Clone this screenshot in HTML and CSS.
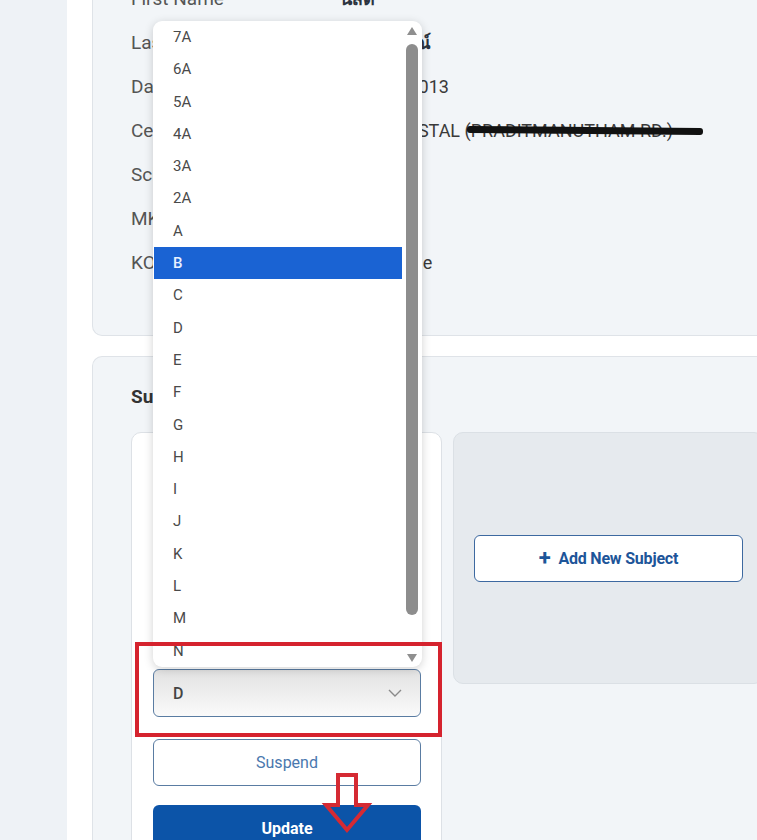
FILE: index.html
```html
<!DOCTYPE html>
<html lang="en">
<head>
    <meta charset="UTF-8">
    <meta name="viewport" content="width=device-width, initial-scale=1.0">
    <title>Student Subjects</title>
    <link rel="stylesheet" href="styles.css">
</head>
<body>
    <div class="main">
        <div class="card info-card">
            <div class="info-row"><span class="info-label">First Name</span><span class="info-value thai">นิสิต</span></div>
            <div class="info-row"><span class="info-label">Last Name</span><span class="info-value thai">มีศรีสุวรรณ์</span></div>
            <div class="info-row"><span class="info-label">Date of Birth</span><span class="info-value">14 June 2013</span></div>
            <div class="info-row"><span class="info-label">Centre</span><span class="info-value">THAI CRYSTAL (<span class="redacted">PRADITMANUTHAM RD.)</span></span></div>
            <div class="info-row"><span class="info-label">School</span><span class="info-value"></span></div>
            <div class="info-row"><span class="info-label">MK ID</span><span class="info-value"></span></div>
            <div class="info-row"><span class="info-label">KO Status</span><span class="info-value">Unavailable</span></div>
        </div>

        <div class="card subjects-card">
            <h2>Subjects</h2>
            <div class="subject-row">
                <div class="subject-box">
                    <div class="field">
                        <div class="field-label">Subject</div>
                        <div class="field-input">Mathematics</div>
                    </div>
                    <div class="field">
                        <div class="field-label">Exam Series</div>
                        <div class="field-input">June 2025</div>
                    </div>
                    <div class="field-label grade-label">Predicted Grade</div>
                    <div class="select-box">
                        <span>D</span>
                        <svg class="chevron" width="14" height="8" viewBox="0 0 14 8"><path d="M1 1l6 6 6-6" fill="none" stroke="#8a8a8a" stroke-width="1.4"/></svg>
                    </div>
                    <button class="btn btn-outline">Suspend</button>
                    <button class="btn btn-primary">Update</button>
                </div>
                <div class="add-box">
                    <button class="btn btn-add"><span class="plus">+</span> Add New Subject</button>
                </div>
            </div>
        </div>
    </div>

    <!-- open grade list -->
    <div class="dropdown">
        <ul class="options">
            <li>7A</li>
            <li>6A</li>
            <li>5A</li>
            <li>4A</li>
            <li>3A</li>
            <li>2A</li>
            <li>A</li>
            <li class="selected">B</li>
            <li>C</li>
            <li>D</li>
            <li>E</li>
            <li>F</li>
            <li>G</li>
            <li>H</li>
            <li>I</li>
            <li>J</li>
            <li>K</li>
            <li>L</li>
            <li>M</li>
            <li>N</li>
        </ul>
        <div class="scrollbar">
            <span class="arrow-up"></span>
            <span class="thumb"></span>
            <span class="arrow-down"></span>
        </div>
    </div>

    <div class="highlight"></div>
    <svg class="pointer" width="56" height="66" viewBox="0 0 56 66">
        <polygon points="18,5 36,5 36,35 48,35 27,60 6,35 18,35" fill="none" stroke="#d52a33" stroke-width="4"/>
    </svg>
</body>
</html>
```

FILE: styles.css
```css
body {
    margin: 0;
    background: #eef2f6;
    font-family: Roboto, "Noto Sans", sans-serif;
    color: #444;
    overflow: hidden;
    height: 840px;
    position: relative;
}
.main {
    margin-left: 67px;
    background: white;
    padding-left: 25px;
    min-height: 900px;
    margin-top: -54px;
}
.card {
    background: #f2f5f8;
    border: 1px solid #dfe3e8;
    border-radius: 10px;
    border-right: none;
    border-top-right-radius: 0;
    border-bottom-right-radius: 0;
}
.info-card {
    padding: 29px 0 51px 38px;
}
.info-row {
    display: flex;
    height: 44px;
    align-items: center;
    font-size: 18px;
}
.info-label {
    width: 209px;
    color: #555;
    font-size: 19px;
    flex-shrink: 0;
}
.info-value {
    color: #3a3a3a;
    white-space: nowrap;
}
.thai {
    font-weight: bold;
    color: #2c3440;
}
.redacted {
    position: relative;
}
.redacted::after {
    content: "";
    position: absolute;
    left: -4px;
    right: -30px;
    top: 7px;
    height: 7px;
    background: #111;
    border-radius: 3px;
    transform: rotate(0.5deg);
}

.subjects-card {
    margin-top: 20px;
    padding: 28px 0 0 38px;
    height: 600px;
}
.subjects-card h2 {
    margin: 0 0 23px;
    font-size: 19px;
    line-height: 24px;
    color: #333;
}
.subject-row {
    display: flex;
    gap: 11px;
    align-items: flex-start;
}
.subject-box {
    width: 311px;
    flex-shrink: 0;
    box-sizing: border-box;
    background: white;
    border: 1px solid #dde1e6;
    border-radius: 10px;
    padding: 21px 20px 40px 21px;
    height: 460px;
}
.field {
    margin-bottom: 22px;
}
.field-label {
    font-size: 14px;
    line-height: 19px;
    margin-bottom: 6px;
    color: #555;
}
.field-input {
    height: 48px;
    box-sizing: border-box;
    border: 1px solid #c9d0d8;
    border-radius: 6px;
    padding: 0 18px;
    line-height: 46px;
}
.select-box {
    height: 48px;
    box-sizing: border-box;
    border: 1.5px solid #5a7ca2;
    border-radius: 6px;
    background: linear-gradient(#e2e2e2, #fafafa);
    display: flex;
    align-items: center;
    justify-content: space-between;
    padding: 0 18px 0 19px;
    font-size: 16px;
    font-weight: 500;
    color: #444;
    margin-bottom: 22px;
}
.btn {
    display: block;
    width: 100%;
    height: 47px;
    border-radius: 6px;
    font-family: Roboto, sans-serif;
    font-size: 16px;
    box-sizing: border-box;
}
.btn-outline {
    background: white;
    border: 1.5px solid #5a7ca2;
    color: #4a78ae;
    margin-bottom: 19px;
}
.btn-primary {
    background: #0c54a8;
    border: none;
    color: white;
    font-weight: bold;
}
.add-box {
    width: 311px;
    flex-shrink: 0;
    height: 252px;
    box-sizing: border-box;
    background: #e6eaee;
    border: 1px solid #dbe0e5;
    border-radius: 10px;
    display: flex;
    align-items: center;
    padding: 0 20px;
}
.btn-add {
    width: 269px;
    background: white;
    border: 1.5px solid #3d69a0;
    color: #1d5599;
    font-weight: bold;
    letter-spacing: -0.2px;
}
.plus {
    font-size: 22px;
    line-height: 16px;
    margin-right: 4px;
    position: relative;
    top: 1px;
}

.dropdown {
    position: absolute;
    left: 153px;
    top: 21px;
    width: 269px;
    height: 646px;
    background: white;
    border-radius: 9px;
    box-shadow: 0 2px 10px rgba(0,0,0,0.18);
    overflow: hidden;
}
.options {
    list-style: none;
    margin: 0;
    padding: 0 20px 0 1px;
}
.options li {
    height: 32.3px;
    line-height: 32.3px;
    padding-left: 19px;
    font-size: 15px;
    color: #4a4a4a;
}
.options li.selected {
    background: #1a63d3;
    color: #e8f1ff;
    font-weight: 500;
}
.scrollbar {
    position: absolute;
    right: 3px;
    top: 0;
    width: 14px;
    height: 100%;
}
.arrow-up, .arrow-down {
    position: absolute;
    left: 2px;
    width: 0;
    height: 0;
    border-left: 5px solid transparent;
    border-right: 5px solid transparent;
}
.arrow-up {
    top: 6px;
    border-bottom: 8px solid #8f8f8f;
}
.arrow-down {
    bottom: 5px;
    border-top: 8px solid #8f8f8f;
}
.thumb {
    position: absolute;
    left: 1px;
    top: 23px;
    width: 12px;
    height: 571px;
    background: #8d8d8d;
    border-radius: 6px;
}
.highlight {
    position: absolute;
    left: 135px;
    top: 642px;
    width: 307px;
    height: 95px;
    box-sizing: border-box;
    border: 4px solid #d5232e;
}
.pointer {
    position: absolute;
    left: 320px;
    top: 770px;
}
```
